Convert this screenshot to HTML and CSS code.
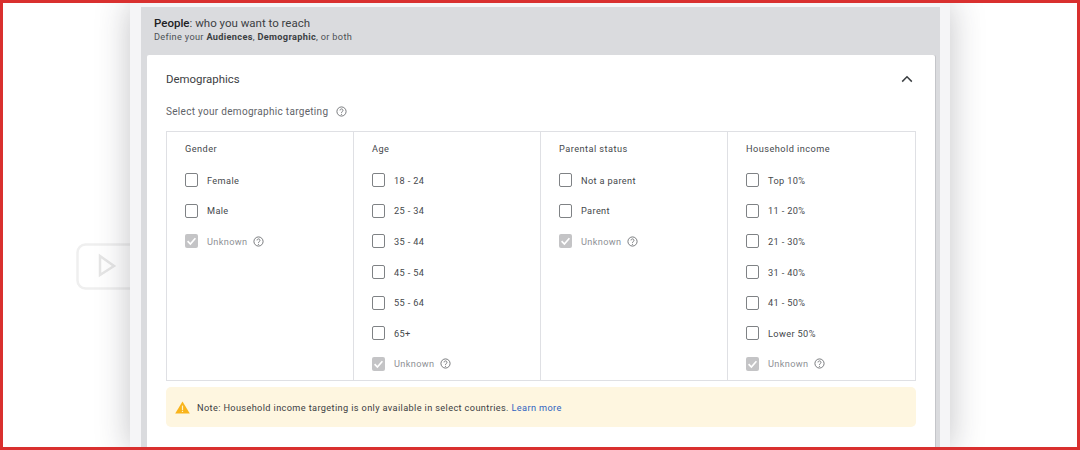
FILE: index.html
```html
<!DOCTYPE html>
<html lang="en">
<head>
<meta charset="utf-8">
<title>Demographics</title>
<link rel="stylesheet" href="styles.css">
</head>
<body>
<div class="frame">
  <svg class="ghost" width="60" height="50" viewBox="0 0 60 50"><rect x="1.5" y="1.5" width="70" height="44" rx="8" fill="#fff" stroke="#efefef" stroke-width="2.5"/><path d="M24 13 L38 23 L24 32 Z" fill="none" stroke="#e6e6e6" stroke-width="2.5"/></svg>
  <main class="panel">
    <section class="section">
      <header class="section-head">
        <h1 class="title"><b>People</b>: who you want to reach</h1>
        <p class="sub">Define your <b>Audiences</b>, <b>Demographic</b>, or both</p>
      </header>
      <div class="card">
        <div class="card-head">
          <h2 class="card-title">Demographics</h2>
          <svg class="chevron" width="12" height="8" viewBox="0 0 12 8"><path d="M1.2 6.6 L6 1.8 L10.8 6.6" fill="none" stroke="#3c4043" stroke-width="1.5"/></svg>
        </div>
        <div class="prompt">Select your demographic targeting
          <svg class="help help-lg" viewBox="0 0 12 12"><use href="#q"/></svg>
        </div>
        <div class="grid">
          <div class="col">
            <h3 class="col-title">Gender</h3>
            <label class="opt"><span class="box"></span>Female</label>
            <label class="opt"><span class="box"></span>Male</label>
            <label class="opt off"><span class="box on"><svg viewBox="0 0 14 14"><path d="M2.8 7.2 L5.8 10.2 L11.2 4" fill="none" stroke="#fff" stroke-width="1.8"/></svg></span>Unknown<svg class="help" viewBox="0 0 12 12"><use href="#q"/></svg></label>
          </div>
          <div class="col">
            <h3 class="col-title">Age</h3>
            <label class="opt"><span class="box"></span>18 - 24</label>
            <label class="opt"><span class="box"></span>25 - 34</label>
            <label class="opt"><span class="box"></span>35 - 44</label>
            <label class="opt"><span class="box"></span>45 - 54</label>
            <label class="opt"><span class="box"></span>55 - 64</label>
            <label class="opt"><span class="box"></span>65+</label>
            <label class="opt off"><span class="box on"><svg viewBox="0 0 14 14"><path d="M2.8 7.2 L5.8 10.2 L11.2 4" fill="none" stroke="#fff" stroke-width="1.8"/></svg></span>Unknown<svg class="help" viewBox="0 0 12 12"><use href="#q"/></svg></label>
          </div>
          <div class="col">
            <h3 class="col-title">Parental status</h3>
            <label class="opt"><span class="box"></span>Not a parent</label>
            <label class="opt"><span class="box"></span>Parent</label>
            <label class="opt off"><span class="box on"><svg viewBox="0 0 14 14"><path d="M2.8 7.2 L5.8 10.2 L11.2 4" fill="none" stroke="#fff" stroke-width="1.8"/></svg></span>Unknown<svg class="help" viewBox="0 0 12 12"><use href="#q"/></svg></label>
          </div>
          <div class="col">
            <h3 class="col-title">Household income</h3>
            <label class="opt"><span class="box"></span>Top 10%</label>
            <label class="opt"><span class="box"></span>11 - 20%</label>
            <label class="opt"><span class="box"></span>21 - 30%</label>
            <label class="opt"><span class="box"></span>31 - 40%</label>
            <label class="opt"><span class="box"></span>41 - 50%</label>
            <label class="opt"><span class="box"></span>Lower 50%</label>
            <label class="opt off"><span class="box on"><svg viewBox="0 0 14 14"><path d="M2.8 7.2 L5.8 10.2 L11.2 4" fill="none" stroke="#fff" stroke-width="1.8"/></svg></span>Unknown<svg class="help" viewBox="0 0 12 12"><use href="#q"/></svg></label>
          </div>
        </div>
        <div class="notice">
          <svg class="warn" width="15" height="13" viewBox="0 0 15 13"><path d="M7.5 0.5 L14.8 12.6 H0.2 Z" fill="#f9b41b"/><rect x="6.9" y="4.6" width="1.2" height="4.4" fill="#fff3c9"/><rect x="6.9" y="9.8" width="1.2" height="1.2" fill="#fff3c9"/></svg>
          <span>Note: Household income targeting is only available in select countries. <a class="link" href="#">Learn more</a></span>
        </div>
      </div>
    </section>
  </main>
  <svg class="defs" width="0" height="0"><defs><g id="q"><circle cx="6" cy="6" r="5" fill="none" stroke="#6d7073" stroke-width="1"/><path d="M4.4 4.8 A1.6 1.6 0 1 1 6.9 6.1 C6.2 6.5 6 6.8 6 7.5" fill="none" stroke="#6d7073" stroke-width="1"/><circle cx="6" cy="9" r=".65" fill="#6d7073"/></g></defs></svg>
</div>
</body>
</html>
```
FILE: styles.css
```css
* { box-sizing: border-box; }
html, body { margin: 0; height: 100%; }
body { font-family: Roboto, "Liberation Sans", sans-serif; background: #fff; }
.frame {
  position: relative;
  width: 1080px;
  height: 450px;
  overflow: hidden;
  display: flex;
  justify-content: center;
  padding-top: 3px;
  background: #fff;
}
.frame::after {
  content: "";
  position: absolute;
  inset: 0;
  border: 3px solid #d9302f;
  pointer-events: none;
}
.ghost { position: absolute; left: 76px; top: 243px; }
.defs { position: absolute; }
.panel {
  position: relative;
  width: 820px;
  height: 447px;
  padding: 4px 10px 0 11px;
  background: #f5f5f7;
  box-shadow: 0 0 32px rgba(40, 40, 50, .28);
}
.section {
  height: 100%;
  padding-left: 6px;
  padding-right: 5px;
  background: #dadbde;
  display: flex;
  flex-direction: column;
}
.section-head { height: 48px; padding: 9px 0 0 7px; color: #3c4043; }
.title { margin: 0; font-size: 11.5px; line-height: 14px; font-weight: 400; }
.title b { font-weight: 500; color: #202124; }
.sub { margin: 1px 0 0; font-size: 9.2px; line-height: 12px; color: #4d5155; letter-spacing: .035em; }
.sub b { font-weight: 700; color: #3c4043; }
.card {
  flex: 1;
  background: #fff;
  padding: 0 19px;
  box-shadow: 1px 0 0 #c4c5c9;
  border-radius: 2px 2px 0 0;
}
.card-head { height: 48px; display: flex; justify-content: space-between; align-items: center; }
.card-title { margin: 0; font-size: 11.4px; font-weight: 400; color: #3c4043; }
.chevron { margin-right: 3px; }
.prompt { display: flex; align-items: center; height: 16px; font-size: 10px; color: #5f6368; letter-spacing: .03em; }
.help { width: 11px; height: 11px; margin-left: 5px; flex: none; }
.help-lg { margin-left: 8px; }
.grid {
  margin-top: 12px;
  height: 250px;
  display: grid;
  grid-template-columns: repeat(4, 1fr);
  border: 1px solid #dfe0e4;
}
.col { padding: 11px 0 0 18px; border-right: 1px solid #dfe0e4; }
.col:last-child { border-right: 0; }
.col-title { margin: 0 0 10px; height: 12px; font-size: 9.2px; line-height: 12px; font-weight: 400; color: #45484c; letter-spacing: .05em; }
.opt { display: flex; align-items: center; height: 30.6px; font-size: 9.2px; color: #45484c; letter-spacing: .04em; }
.off { color: #8f9296; }
.box {
  flex: none;
  width: 13px;
  height: 14px;
  margin-right: 9px;
  border: 1.5px solid #7f8285;
  border-radius: 2px;
}
.box.on { border: 0; background: #c4c4c6; display: block; }
.box svg { display: block; width: 13px; height: 14px; }
.notice {
  margin-top: 6px;
  height: 40px;
  display: flex;
  align-items: center;
  gap: 7px;
  padding-left: 9px;
  background: #fef6e0;
  border-radius: 5px;
  font-size: 9.2px;
  color: #3c4043;
  letter-spacing: .04em;
}
.link { color: #2f63c0; text-decoration: none; }
```
